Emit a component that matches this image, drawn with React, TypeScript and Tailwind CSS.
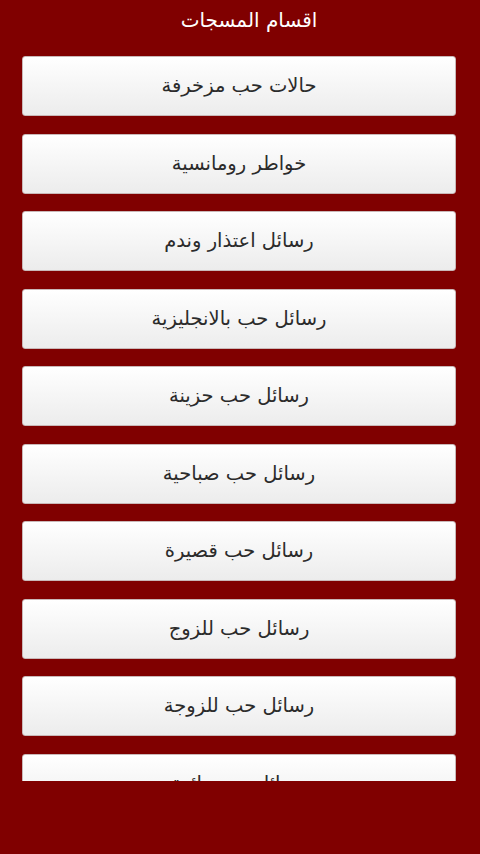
const items = [
  "حالات حب مزخرفة",
  "خواطر رومانسية",
  "رسائل اعتذار وندم",
  "رسائل حب بالانجليزية",
  "رسائل حب حزينة",
  "رسائل حب صباحية",
  "رسائل حب قصيرة",
  "رسائل حب للزوج",
  "رسائل حب للزوجة",
  "رسائل حب رائعة",
];

export default function App() {
  return (
    <div
      dir="rtl"
      className="w-[480px] h-[854px] bg-[#800000] flex flex-col overflow-hidden"
      style={{ fontFamily: '"DejaVu Sans", sans-serif' }}
    >
      {/* Header */}
      <div className="h-[40px] pl-[18px] flex items-center justify-center text-white text-[20px]">
        اقسام المسجات
      </div>

      {/* List */}
      <div className="h-[741px] overflow-hidden pt-[16px] pl-[22px] pr-[24px] flex flex-col gap-[17.5px]">
        {items.map((t) => (
          <div
            key={t}
            className="shrink-0 h-[60px] rounded-[3px] border border-[#c9b8b8] bg-gradient-to-b from-white to-[#ececec] flex items-center justify-center text-[#2b2b2b] text-[19.5px]"
          >
            {t}
          </div>
        ))}
      </div>
    </div>
  );
}
